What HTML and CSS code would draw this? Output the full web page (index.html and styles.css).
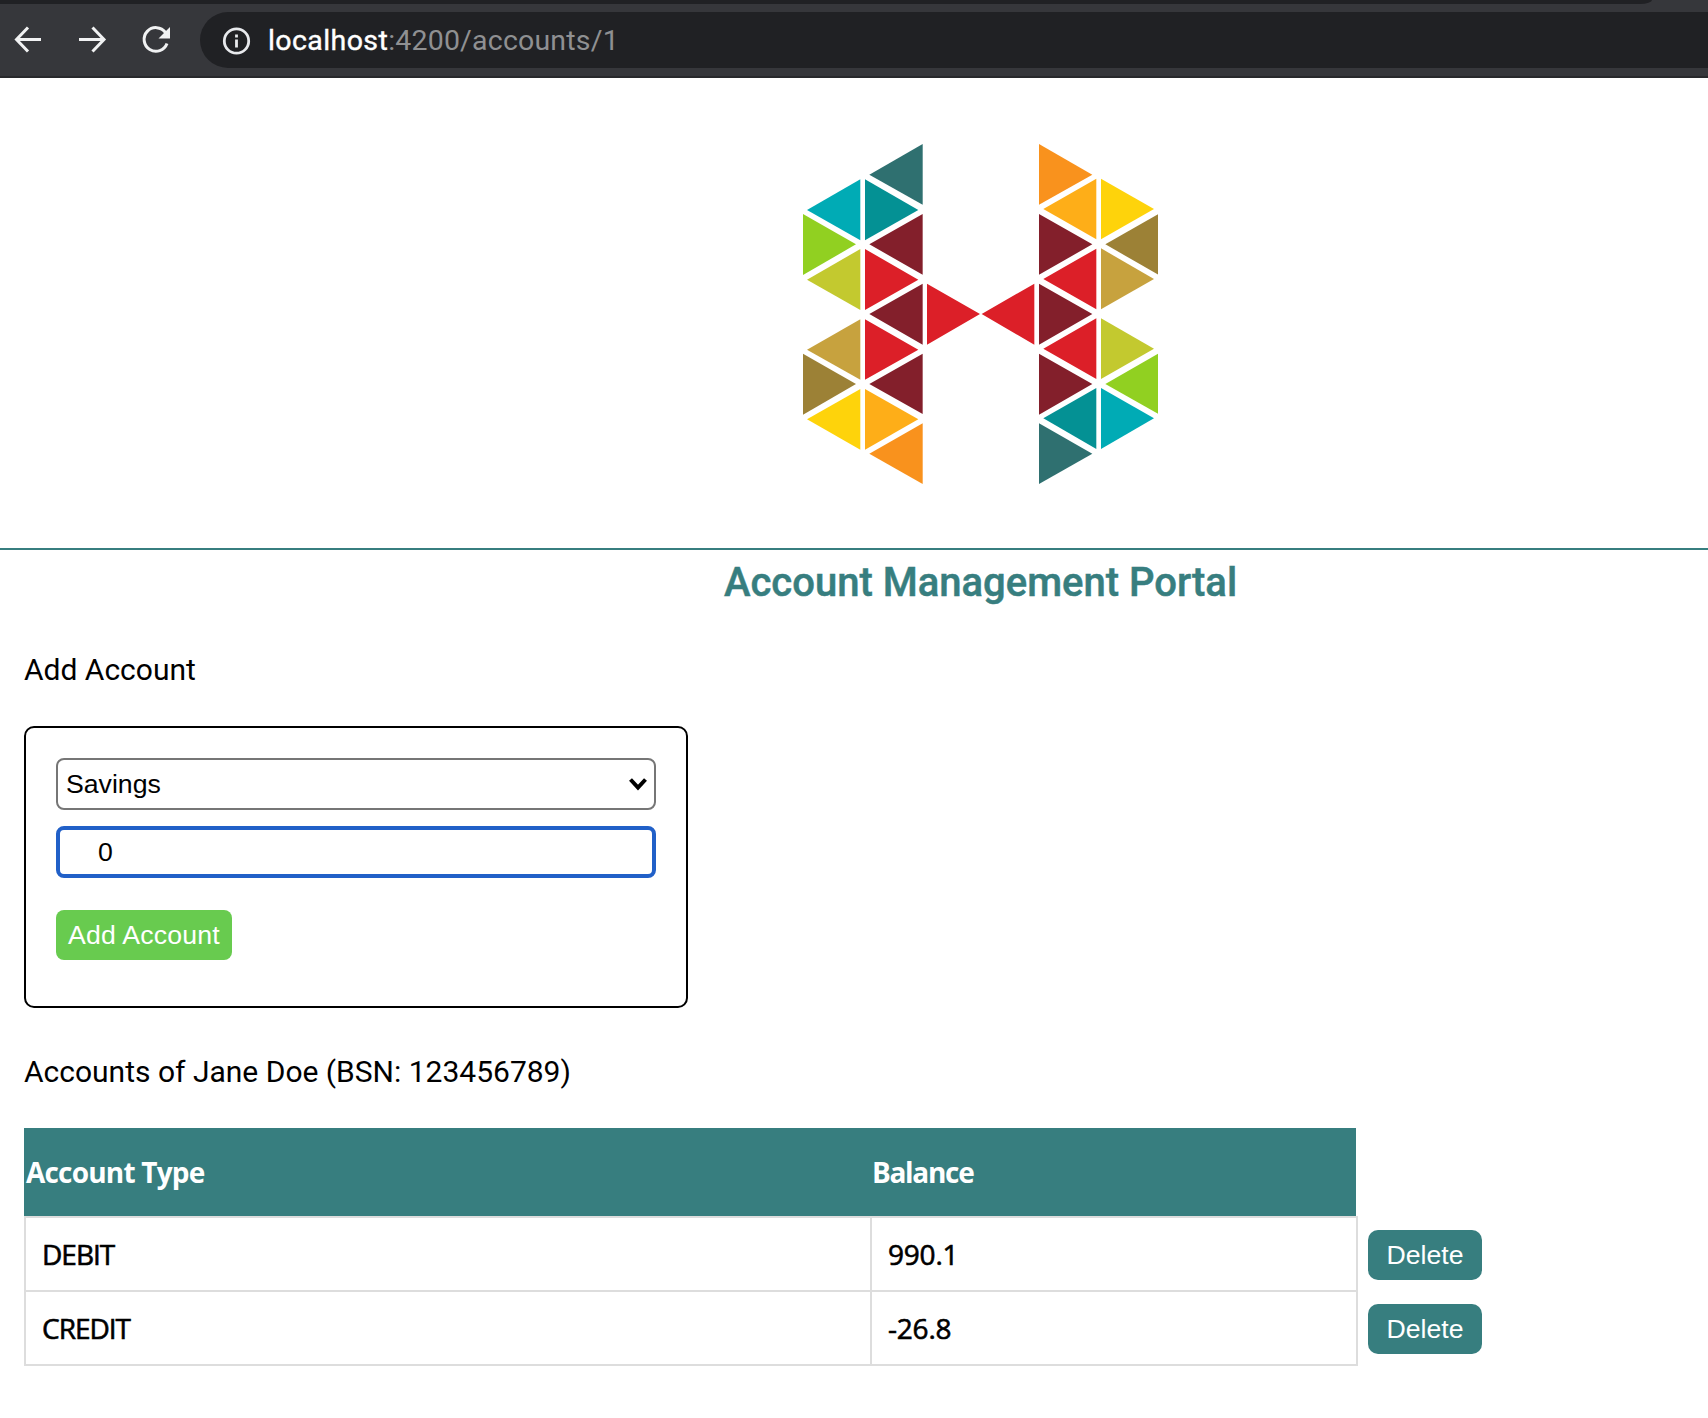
FILE: index.html
```html
<!DOCTYPE html>
<html lang="en">
<head>
<meta charset="utf-8">
<title>Account Management Portal</title>
<link rel="stylesheet" href="styles.css">
</head>
<body>
<header class="browser">
  <div class="tab-strip"></div>
  <div class="toolbar">
    <svg class="nav-icon" viewBox="0 0 32 32"><path d="M29 15.500H4M16 3.500L4.500 15.500 16 27.500"/></svg>
    <svg class="nav-icon" viewBox="0 0 32 32"><path d="M3 15.500h25M16.500 3.500L28 15.500 16.500 27.500"/></svg>
    <svg class="nav-icon" viewBox="0 0 32 32"><path d="M25.500 8.500A11.800 11.800 0 1 0 27 19.500"/><path class="solid" d="M30 3v11.500H18.500z"/></svg>
    <div class="address">
      <svg class="info-icon" viewBox="0 0 28 28"><circle cx="14" cy="14" r="12.200"/><path d="M14 12.500v8M14 7.500v3"/></svg>
      <span class="url"><span class="host">localhost</span>:4200/accounts/1</span>
    </div>
  </div>
</header>
<main class="page">
  <div class="banner">
    <svg class="logo" viewBox="39 43 1066 1020">
      <g>
        <path fill="#2f7070" d="M238 135L398 43V225z"/>
        <path fill="#00abb5" d="M51 241L211 149V332z"/>
        <path fill="#049194" d="M225 149L385 241L225 332z"/>
        <path fill="#91d021" d="M39 253L198 344L39 436z"/>
        <path fill="#831f2b" d="M238 344L398 253V435zM238 553L398 462V645zM238 763L398 672V853z"/>
        <path fill="#c3c92f" d="M51 450L211 358V541z"/>
        <path fill="#dc1f28" d="M225 358L385 450L225 541zM411 462L570 553L411 645zM225 569L385 660L225 750z"/>
        <path fill="#c7a23e" d="M51 660L211 569V750z"/>
        <path fill="#9c8136" d="M39 672L198 763L39 855z"/>
        <path fill="#fed30b" d="M51 869L211 778V960z"/>
        <path fill="#feae18" d="M225 778L385 869L225 960z"/>
        <path fill="#f9921d" d="M238 972L398 881V1063z"/>
      </g>
      <g transform="translate(540 0)">
        <path fill="#f9921d" d="M207 43L367 135L207 225z"/>
        <path fill="#feae18" d="M220 238L379 147V329z"/>
        <path fill="#fed30b" d="M393 147L552 238L393 329z"/>
        <path fill="#9c8136" d="M406 344L565 253V435z"/>
        <path fill="#831f2b" d="M207 253L367 344L207 435zM207 462L367 553L207 645zM207 672L367 763L207 855z"/>
        <path fill="#dc1f28" d="M220 448L379 357V539zM35 553L193 462V645zM220 657L379 566V748z"/>
        <path fill="#c7a23e" d="M393 356L552 448L393 539z"/>
        <path fill="#c3c92f" d="M393 566L552 657L393 748z"/>
        <path fill="#91d021" d="M406 763L565 672V853z"/>
        <path fill="#049194" d="M220 866L379 775V958z"/>
        <path fill="#00abb5" d="M393 775L552 866L393 958z"/>
        <path fill="#2f7070" d="M207 881L367 972L207 1063z"/>
      </g>
    </svg>
  </div>
  <h1 class="title">Account Management Portal</h1>
  <div class="content">
    <p class="label">Add Account</p>
    <form class="account-form">
      <div class="select"><span>Savings</span>
        <svg class="chevron" viewBox="0 0 20 14"><path d="M2.500 2.500L10 10.500l7.500-8"/></svg>
      </div>
      <div class="amount">0</div>
      <button class="add" type="button">Add Account</button>
    </form>
    <p class="label owner">Accounts of Jane Doe (BSN: 123456789)</p>
    <div class="accounts">
      <div class="row head"><div class="cell type">Account Type</div><div class="cell balance">Balance</div></div>
      <div class="row"><div class="cell type">DEBIT</div><div class="cell balance">990.1</div><button class="delete" type="button">Delete</button></div>
      <div class="row"><div class="cell type">CREDIT</div><div class="cell balance">-26.8</div><button class="delete" type="button">Delete</button></div>
    </div>
  </div>
</main>
</body>
</html>
```
FILE: styles.css
```css
* { box-sizing: border-box; }
body {
  margin: 0;
  min-height: 1418px;
  background: #fff;
  color: #000;
  font-family: Roboto, sans-serif;
}
.browser {
  height: 78px;
  background: #36373b;
  border-bottom: 2px solid #28292c;
}
.tab-strip {
  width: 1652px;
  height: 4px;
  background: #202124;
  border-bottom-right-radius: 12px 4px;
}
.toolbar {
  display: flex;
  align-items: center;
  height: 72px;
  padding-left: 12px;
  gap: 32px;
}
.nav-icon {
  flex: none;
  width: 32px;
  height: 32px;
  fill: none;
  stroke: #f1f2f3;
  stroke-width: 3;
}
.nav-icon .solid { fill: #f1f2f3; stroke: none; }
.address {
  display: flex;
  align-items: center;
  flex: 1;
  height: 56px;
  margin-left: -4px;
  padding-left: 22px;
  gap: 17px;
  border-radius: 28px 0 0 28px;
  background: #202124;
}
.info-icon {
  width: 29px;
  height: 28px;
  margin-top: 1px;
  fill: none;
  stroke: #e8eaed;
  stroke-width: 2.8;
}
.url {
  padding-top: 1px;
  color: #8f9092;
  font-size: 28.5px;
  line-height: 32px;
  letter-spacing: 0.2px;
}
.host { color: #fff; -webkit-text-stroke: 0.4px #fff; letter-spacing: 0.4px; }
.banner {
  display: flex;
  justify-content: center;
  height: 472px;
  padding: 66px 0 0 253px;
  border-bottom: 2px solid #377e7f;
}
.logo { width: 355.33px; height: 340px; }
.title {
  margin: 9px 0 0;
  padding-left: 253px;
  color: #377e7f;
  font-size: 40px;
  font-weight: 500;
  line-height: 48px;
  text-align: center;
  -webkit-text-stroke: 0.5px #377e7f;
}
.content { padding: 46px 24px 0; }
.label { margin: 0; font-size: 30px; line-height: 34px; }
.account-form {
  display: flex;
  flex-direction: column;
  align-items: flex-start;
  width: 664px;
  height: 282px;
  margin-top: 39px;
  padding: 30px;
  border: 2px solid #000;
  border-radius: 10px;
  font: 26.67px/30px "Liberation Sans", sans-serif;
}
.select {
  display: flex;
  align-items: center;
  justify-content: space-between;
  width: 600px;
  height: 52px;
  padding: 0 6px 0 8px;
  border: 2px solid #767676;
  border-radius: 8px;
}
.chevron { width: 20px; height: 14px; fill: none; stroke: #000; stroke-width: 4; }
.amount {
  width: 600px;
  height: 52px;
  margin: 16px 0 32px;
  padding: 7px 0 0 38px;
  border: 4px solid #2160c8;
  border-radius: 8px;
}
button {
  border: 0;
  color: #fff;
  font: 26.67px/30px "Liberation Sans", sans-serif;
  white-space: nowrap;
}
.add {
  width: 176px;
  height: 50px;
  padding: 0;
  border-radius: 8px;
  background: #68cb4f;
  letter-spacing: 0.2px;
}
.owner { margin-top: 47px; }
.accounts {
  margin-top: 39px;
  font: 28px/36px "Open Sans", sans-serif;
}
.row { display: flex; align-items: center; height: 74px; }
.cell {
  height: 74px;
  padding: 18px 0 0 16px;
  border: solid #ddd;
  border-width: 0 2px 2px 0;
  -webkit-text-stroke: 0.6px currentColor;
}
.type { width: 848px; border-left-width: 2px; letter-spacing: -1px; }
.balance { width: 486px; letter-spacing: -0.2px; }
.head {
  width: 1334px;
  height: 90px;
  border-bottom: 2px solid #ddd;
  background: linear-gradient(#377e7f, #377e7f) 0 0 / 1332px 100% no-repeat;
  color: #fff;
  font-weight: 700;
}
.head .cell {
  height: 88px;
  border: 0;
  padding: 26px 0 0 2px;
  letter-spacing: -0.8px;
  -webkit-text-stroke: 0;
}
.head .balance { padding-left: 0; letter-spacing: -1.3px; }
.delete {
  width: 114px;
  height: 50px;
  margin: 0 0 0 10px;
  padding: 0;
  border-radius: 10px;
  background: #377e7f;
}
```
